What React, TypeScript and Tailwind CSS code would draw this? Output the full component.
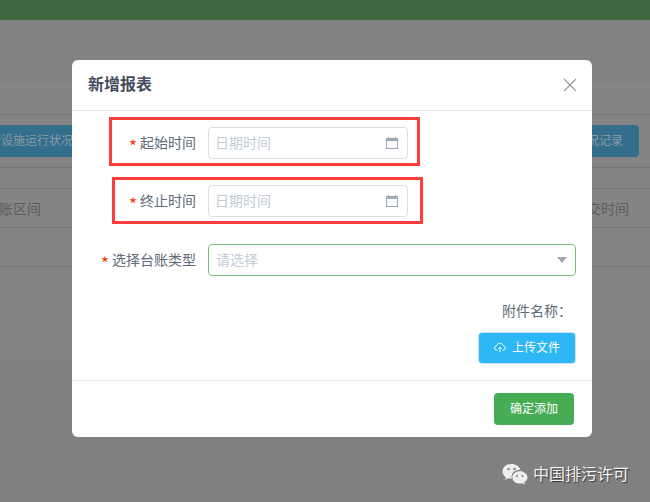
const font = { fontFamily: '"Noto Sans CJK SC", "Liberation Sans", sans-serif' };

const CalendarIcon = () => (
  <svg width="14" height="14" viewBox="0 0 14 14" className="text-[#9ea7b4]">
    <rect x="1.500" y="2.500" width="11" height="10" fill="none" stroke="currentColor" strokeWidth="1" />
    <rect x="1" y="2" width="12" height="3" fill="currentColor" />
    <rect x="3" y="1" width="1" height="2" fill="currentColor" />
    <rect x="10" y="1" width="1" height="2" fill="currentColor" />
  </svg>
);

const CloudIcon = () => (
  <svg width="12" height="10" viewBox="0 0 14 12" fill="none" stroke="white" strokeWidth="1.100">
    <path d="M4 8.500H3A2.500 2.500 0 0 1 2.800 3.500 4 4 0 0 1 10.600 3 2.800 2.800 0 0 1 11 8.500H10" />
    <path d="M7 11V5M5 7l2-2 2 2" />
  </svg>
);

const WechatIcon = () => (
  <svg width="26" height="23" viewBox="0 0 26 23">
    <path d="M9.500 0C4.500 0 .5 3.300.5 7.400c0 2.400 1.300 4.400 3.400 5.800L3 16l3.200-1.700c1 .3 2 .5 3.200.5h.5a6.600 6.600 0 0 1-.3-2c0-4 3.700-7.100 8.300-7.100h.5C17.400 2.600 13.800 0 9.500 0z" fill="#eeeeee" />
    <circle cx="6.500" cy="5" r="1.200" fill="#808080" />
    <circle cx="12.500" cy="5" r="1.200" fill="#808080" />
    <path d="M17.800 7.200c-4 0-7.500 2.700-7.500 6.200s3.500 6.200 7.500 6.200c.9 0 1.700-.1 2.500-.4l2.500 1.500-.7-2.400c2-1.200 3.400-3 3.400-4.900 0-3.500-3.700-6.200-7.700-6.200z" fill="#eeeeee" />
    <circle cx="15" cy="12" r="1" fill="#808080" />
    <circle cx="20.500" cy="12" r="1" fill="#808080" />
  </svg>
);

const Label = ({ text }: { text: string }) => (
  <label className="flex w-[136px] shrink-0 items-center justify-end pb-[2px] pr-3 text-[14px] text-[#606a78]">
    <span className="relative top-[3px] mr-[3px] text-[17px] leading-none text-[#ff3300]">*</span>
    {text}
  </label>
);

const DateRow = ({ label, mark }: { label: string; mark: string }) => (
  <div className="relative flex items-center">
    <Label text={label} />
    <div className="flex h-8 w-[200px] items-center justify-between rounded border border-[#dddee1] bg-white pl-[6px] pr-2 text-[14px] text-[#c3cbd6]">
      <span className="pb-[2px]">日期时间</span>
      <CalendarIcon />
    </div>
    <div className={mark} />
  </div>
);

export default function App() {
  return (
    <div className="relative h-[502px] w-[650px] overflow-hidden bg-[#808080]" style={font}>
      {/* page behind the mask */}
      <div className="h-5 bg-[#41693f]" />
      <div className="h-[340px] bg-[#858585]">
        <div className="h-[64px] bg-[#838383]" />
        <div className="h-[31px] border-b border-[#767676]" />
        <div className="flex h-[53px] items-start justify-between border-b border-[#767676] pt-[10px]">
          <div className="-ml-[35px] flex h-8 w-[120px] items-center justify-center rounded bg-[#336f8d] pb-[2px] text-[12px] text-[#8a9aa3]">
            上传设施运行状况
          </div>
          <div className="mr-[11px] flex h-8 w-[120px] items-center justify-end rounded bg-[#336f8d] pb-[2px] pr-4 text-[12px] text-[#8a9aa3]">
            设施运行状况记录
          </div>
        </div>
        <div className="h-[21px] border-b border-[#767676]" />
        <div className="flex h-[39px] items-center justify-between border-b border-[#767676] pr-[21px] text-[14px] text-[#5c5c5c]">
          <span className="-ml-[1px]">账区间</span>
          <span>提交时间</span>
        </div>
        <div className="h-[39px] border-b border-[#767676]" />
      </div>

      {/* mask content */}
      <div className="absolute left-[502px] top-[462px] flex items-center gap-[5px]">
        <WechatIcon />
        <span className="mb-1 text-[16px] leading-[22px] text-[#f2f2f2] [text-shadow:1px_1px_1px_#333]">中国排污许可</span>
      </div>

      <div className="absolute left-[72px] top-[60px] w-[520px] rounded-md bg-white">
        <div className="flex h-[51px] items-center justify-between border-b border-[#e3e8ee] pl-4 pr-[15px]">
          <h2 className="pb-1 text-[16px] font-bold text-[#464c5b]">新增报表</h2>
          <svg width="14" height="14" viewBox="0 0 14 14" stroke="#999" strokeWidth="1.100">
            <path d="M1 1l12 12M13 1L1 13" />
          </svg>
        </div>

        <div className="flex flex-col pt-4">
          <DateRow label="起始时间" mark="absolute left-[37px] top-[-10px] h-[49px] w-[311px] border-[3px] border-[#ff3b3b]" />
          <div className="mt-[26px]">
            <DateRow label="终止时间" mark="absolute left-[40px] top-[-8px] h-[47px] w-[311px] border-[3px] border-[#ff3b3b]" />
          </div>
          <div className="mt-[27px] flex items-center">
            <Label text="选择台账类型" />
            <div className="flex h-8 w-[368px] items-center justify-between rounded border border-[#73bf7b] bg-white pl-[7px] pr-2 text-[14px] text-[#c3cbd6]">
              <span className="pb-[2px]">请选择</span>
              <div className="h-0 w-0 border-x-[5px] border-t-[6px] border-x-transparent border-t-[#9ea7b4]" />
            </div>
          </div>
          <div className="mt-[24px] pr-5 text-right text-[14px] leading-5 text-[#606a78]">附件名称：</div>
          <div className="mt-3 flex justify-end pr-4">
            <button className="flex h-8 w-[98px] items-center justify-center gap-[6px] rounded border border-[#c9e6f5] bg-[#2db7f5] text-[12px] text-white">
              <CloudIcon />
              <span className="pb-[2px]">上传文件</span>
            </button>
          </div>
        </div>

        <div className="mt-4 flex h-[57px] items-start justify-end border-t border-[#e3e8ee] pr-[18px] pt-3">
          <button className="h-8 w-20 rounded bg-[#47ad55] pb-[2px] text-[12px] text-white">确定添加</button>
        </div>
      </div>
    </div>
  );
}
